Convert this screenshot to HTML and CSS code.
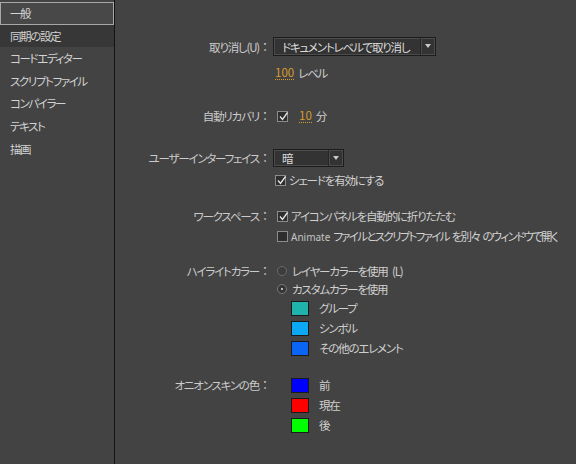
FILE: index.html
```html
<!DOCTYPE html>
<html lang="ja">
<head>
<meta charset="utf-8">
<link rel="stylesheet" href="styles.css">
</head>
<body>
<nav class="sidebar">
  <div class="nav-item active">一般</div>
  <div class="nav-item hover">同期の設定</div>
  <div class="nav-item">コードエディター</div>
  <div class="nav-item">スクリプトファイル</div>
  <div class="nav-item">コンパイラー</div>
  <div class="nav-item">テキスト</div>
  <div class="nav-item">描画</div>
</nav>
<main class="main">
  <div class="row r-undo">
    <span class="label">取り消し(U)<span class="colon">：</span></span>
    <div class="field"><div class="select wide"><span class="sel-text">ドキュメントレベルで取り消し</span><span class="sel-arrow"></span></div></div>
  </div>
  <div class="row r-levels">
    <span class="label"></span>
    <div class="field"><span class="num">100</span><span class="unit">レベル</span></div>
  </div>
  <div class="row r-recover">
    <span class="label">自動リカバリ<span class="colon">：</span></span>
    <div class="field"><span class="check on"><svg viewBox="0 0 11 11"><path d="M2 5.5 L4.5 8.5 L9.5 1.5" fill="none" stroke="#e8e8e8" stroke-width="1.3"/></svg></span><span class="num n10">10</span><span class="unit">分</span></div>
  </div>
  <div class="row r-ui">
    <span class="label">ユーザーインターフェイス<span class="colon">：</span></span>
    <div class="field"><div class="select narrow"><span class="sel-text">暗</span><span class="sel-arrow"></span></div></div>
  </div>
  <div class="row r-shade">
    <span class="label"></span>
    <div class="field"><span class="check on"><svg viewBox="0 0 11 11"><path d="M2 5.5 L4.5 8.5 L9.5 1.5" fill="none" stroke="#e8e8e8" stroke-width="1.3"/></svg></span><span class="opt">シェードを有効にする</span></div>
  </div>
  <div class="row r-ws">
    <span class="label">ワークスペース<span class="colon">：</span></span>
    <div class="field"><span class="check on"><svg viewBox="0 0 11 11"><path d="M2 5.5 L4.5 8.5 L9.5 1.5" fill="none" stroke="#e8e8e8" stroke-width="1.3"/></svg></span><span class="opt">アイコンパネルを自動的に折りたたむ</span></div>
  </div>
  <div class="row r-ws2">
    <span class="label"></span>
    <div class="field"><span class="check"></span><span class="opt"><span class="latin">Animate</span> ファイルとスクリプトファイル を別々 のウィンドウで開く</span></div>
  </div>
  <div class="row r-hl">
    <span class="label">ハイライトカラー<span class="colon">：</span></span>
    <div class="field"><span class="radio"></span><span class="opt">レイヤーカラーを使用 (L)</span></div>
  </div>
  <div class="row r-custom">
    <span class="label"></span>
    <div class="field"><span class="radio on"></span><span class="opt">カスタムカラーを使用</span></div>
  </div>
  <div class="swatches s-hl">
    <div class="row sw-row"><span class="label"></span><div class="field"><span class="swatch teal"></span><span class="sw-label">グループ</span></div></div>
    <div class="row sw-row"><span class="label"></span><div class="field"><span class="swatch sky"></span><span class="sw-label">シンボル</span></div></div>
    <div class="row sw-row"><span class="label"></span><div class="field"><span class="swatch azure"></span><span class="sw-label">その他のエレメント</span></div></div>
  </div>
  <div class="swatches s-onion">
    <div class="row sw-row"><span class="label">オニオンスキンの色<span class="colon">：</span></span><div class="field"><span class="swatch blue"></span><span class="sw-label">前</span></div></div>
    <div class="row sw-row"><span class="label"></span><div class="field"><span class="swatch red"></span><span class="sw-label">現在</span></div></div>
    <div class="row sw-row"><span class="label"></span><div class="field"><span class="swatch green"></span><span class="sw-label">後</span></div></div>
  </div>
</main>
</body>
</html>
```

FILE: styles.css
```css
* { box-sizing: border-box; }
html, body { margin: 0; padding: 0; }
body {
  width: 576px;
  height: 464px;
  overflow: hidden;
  background: #434343;
  display: flex;
  font-family: "Noto Sans CJK JP", "Noto Sans", sans-serif;
  font-size: 11.5px;
  letter-spacing: -1.2px;
  word-spacing: 3px;
  font-feature-settings: "palt";
  color: #cfcfcf;
}
.sidebar {
  width: 115px;
  flex: none;
  border-right: 1px solid #141414;
  padding-top: 2px;
}
.nav-item {
  height: 22.6px;
  line-height: 22px;
  padding-left: 10px;
  white-space: nowrap;
  color: #d2d2d2;
  letter-spacing: -1.4px;
}
.nav-item.active {
  border: 1px solid #a8a8a8;
  background: #484848;
  padding-left: 9px;
  line-height: 20px;
}
.nav-item.hover { background: #373737; }

.main {
  flex: 1;
  padding-top: 37px;
  display: flex;
  flex-direction: column;
}
.row {
  display: grid;
  grid-template-columns: 156px 1fr;
  column-gap: 2px;
  align-items: center;
  height: 16px;
}
.label {
  text-align: right;
  white-space: nowrap;
  color: #cbcbcb;
  line-height: 16px;
}
.colon {
  font-feature-settings: normal;
  letter-spacing: 0;
  font-size: 12px;
}
.field {
  display: flex;
  align-items: center;
  white-space: nowrap;
  line-height: 16px;
}
.r-undo { height: 19px; }
.r-levels { margin-top: 9px; }
.r-recover { margin-top: 27px; }
.r-ui { height: 18px; margin-top: 25px; }
.r-shade { margin-top: 5px; }
.r-ws { margin-top: 20px; }
.r-ws2 { margin-top: 4px; }
.r-hl { margin-top: 19px; }
.r-custom { margin-top: 2px; }
.s-hl { margin-top: 1px; }
.s-onion { margin-top: 17px; }
.sw-row { height: 20px; }

.select {
  height: 19px;
  display: flex;
  align-items: center;
  background: #333333;
  border: 1px solid #1d1d1d;
  box-shadow: inset 0 0 0 1px #4c4c4c;
  color: #dcdcdc;
}
.select.wide { width: 163px; }
.select.narrow { width: 71px; height: 18px; }
.sel-text { flex: 1; padding-left: 8px; line-height: 16px; overflow: hidden; }
.sel-arrow {
  width: 15px;
  height: 100%;
  border-left: 1px solid #262626;
  box-shadow: inset 1px 0 0 #4a4a4a;
  position: relative;
  flex: none;
}
.sel-arrow::after {
  content: "";
  position: absolute;
  left: 4px;
  top: 6px;
  border-left: 3.5px solid transparent;
  border-right: 3.5px solid transparent;
  border-top: 4px solid #c8c8c8;
}
.num {
  color: #d99c2c;
  border-bottom: 1px dotted #d99c2c;
  line-height: 13px;
  margin-left: 2px;
  letter-spacing: 0;
}
.unit { margin-left: 4px; }
.check {
  width: 11px;
  height: 11px;
  flex: none;
  margin-left: 4px;
  border: 1px solid #8c8c8c;
  background: #2e2e2e;
  display: block;
}
.check svg { display: block; width: 11px; height: 11px; margin: -1px 0 0 0; }
.r-shade .check { margin-left: 2px; }
.n10 { margin-left: 11px; }
.opt { margin-left: 3px; color: #d0d0d0; }
.r-ws2 .opt { letter-spacing: -1.7px; word-spacing: 2px; }
.latin { font-family: "Noto Sans", sans-serif; font-size: 10px; letter-spacing: 0; word-spacing: 0; color: #c4c4c4; }
.radio {
  width: 10px;
  height: 10px;
  margin-left: 4px;
  border-radius: 50%;
  border: 1px solid #6a6a6a;
  background: #3c3c3c;
  flex: none;
  position: relative;
}
.radio.on { border-color: #7a7a7a; background: #353535; }
.radio.on::after {
  content: "";
  position: absolute;
  left: 3px;
  top: 3px;
  width: 2px;
  height: 2px;
  border-radius: 50%;
  background: #e6e6e6;
}
.r-hl .opt, .r-custom .opt { margin-left: 5px; }
.swatch {
  width: 18px;
  height: 15px;
  margin-left: 18px;
  border: 1px solid #1a1a1a;
  flex: none;
}
.sw-label { margin-left: 10px; }
.teal { background: #1fb3ab; }
.sky { background: #0da8f4; }
.azure { background: #0a64f4; }
.blue { background: #0000ff; }
.red { background: #ff0000; }
.green { background: #00ff00; }
```
